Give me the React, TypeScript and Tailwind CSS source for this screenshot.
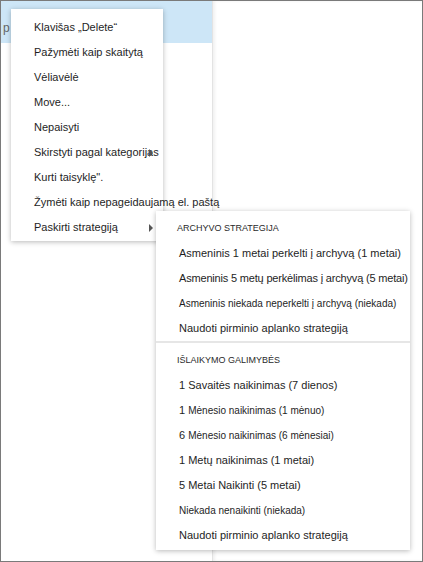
import React from "react";

type Item = { label: React.ReactNode; small?: boolean; tight?: boolean };

const mainItems = [
  "Klavišas „Delete“",
  "Pažymėti kaip skaitytą",
  "Vėliavėlė",
  "Move...",
  "Nepaisyti",
  "Skirstyti pagal kategorijas",
  "Kurti taisyklę\".",
  "Žymėti kaip nepageidaujamą el. paštą",
];

const archiveItems: Item[] = [
  { label: "Asmeninis 1 metai perkelti į archyvą (1 metai)" },
  { label: "Asmeninis 5 metų perkėlimas į archyvą (5 metai)", tight: true },
  { label: "Asmeninis niekada neperkelti į archyvą (niekada)", small: true },
  { label: "Naudoti pirminio aplanko strategiją" },
];

const retentionItems: Item[] = [
  { label: "1 Savaitės naikinimas (7 dienos)" },
  { label: <>1 <span className="text-[10px]">Mėnesio naikinimas (1 mėnuo)</span></> },
  { label: <>6 <span className="text-[10px]">Mėnesio naikinimas (6 mėnesiai)</span></> },
  { label: "1 Metų naikinimas (1 metai)" },
  { label: "5 Metai Naikinti (5 metai)" },
  { label: "Niekada nenaikinti (niekada)", small: true },
  { label: "Naudoti pirminio aplanko strategiją" },
];

function Arrow() {
  return (
    <span className="absolute left-[138px] top-1/2 -translate-y-1/2 h-0 w-0 border-y-[4px] border-l-[4px] border-y-transparent border-l-[#555]" />
  );
}

function SubRow({ item }: { item: Item }) {
  return (
    <div
      className={`flex h-[25px] items-center whitespace-nowrap pl-[23px] text-[#1e1e1e] ${item.small ? "text-[10px]" : "text-[11px]"} ${item.tight ? "tracking-[-0.18px]" : ""}`}
    >
      <span>{item.label}</span>
    </div>
  );
}

function Header({ children }: { children: React.ReactNode }) {
  return (
    <div className="flex h-[30px] items-center pl-[21px] pt-[6px] text-[9px] text-[#2a2a2a]">
      {children}
    </div>
  );
}

export default function App() {
  return (
    <div
      className="relative flex h-[562px] w-[423px] overflow-hidden border border-[#7a7a7a] bg-white"
      style={{ fontFamily: '"Liberation Sans", Arial, sans-serif' }}
    >
      <div className="w-[212px] shrink-0 border-r border-[#e3e3e3]">
        <div className="flex h-[42px] items-center bg-[#cde6f7] pl-[2px] pt-[12px] text-[12px] text-[#666]">
          p
        </div>
      </div>
      <div className="flex-1 shadow-[inset_2px_0_3px_rgba(0,0,0,0.06)]" />

      {/* main context menu */}
      <div className="absolute left-[10px] top-[8px] w-[152px] bg-white pt-[6px] pb-px shadow-[0_1px_5px_rgba(0,0,0,0.28)]">
        {mainItems.map((label) => (
          <div key={label} className="relative flex h-[25px] items-center whitespace-nowrap pl-[23px] text-[11px] text-[#1e1e1e]">
            <span>{label}</span>
            {label.startsWith("Skirstyti") && <Arrow />}
          </div>
        ))}
        <div className="relative flex h-[25px] items-center pl-[23px] text-[11px] text-[#1e1e1e]">
          <span>Paskirti strategiją</span>
          <Arrow />
        </div>
      </div>

      {/* strategy submenu */}
      <div className="absolute left-[155px] top-[210px] w-[254px] bg-white pb-[2px] shadow-[0_1px_5px_rgba(0,0,0,0.28)]">
        <Header>ARCHYVO STRATEGIJA</Header>
        {archiveItems.map((item, i) => (
          <SubRow key={i} item={item} />
        ))}
        <div className="h-[2px] bg-[#e6e6e6]" />
        <Header>IŠLAIKYMO GALIMYBĖS</Header>
        {retentionItems.map((item, i) => (
          <SubRow key={i} item={item} />
        ))}
      </div>
    </div>
  );
}
